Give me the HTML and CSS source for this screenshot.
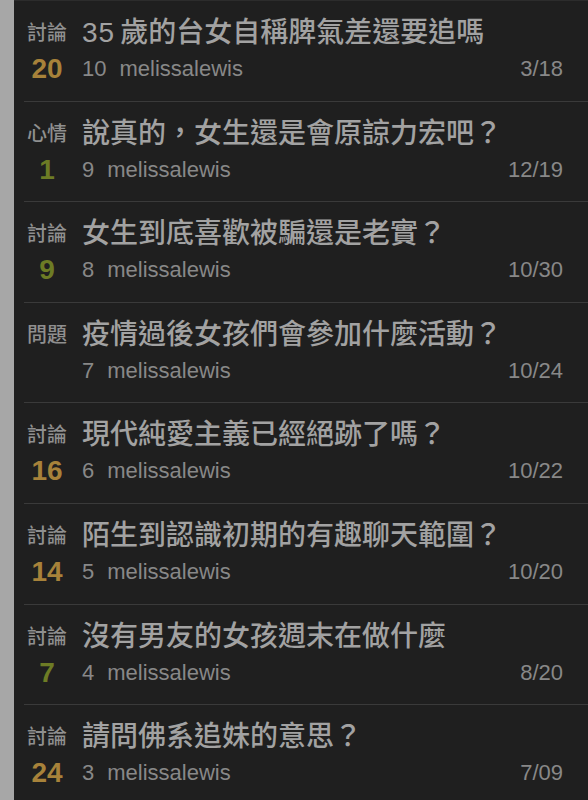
FILE: index.html
```html
<!DOCTYPE html>
<html lang="zh-Hant">
<head>
    <meta charset="UTF-8">
    <meta name="viewport" content="width=device-width, initial-scale=1.0">
    <title>melissalewis 的文章</title>
    <link rel="stylesheet" href="styles.css">
</head>
<body>
    <div class="page">
        <div class="rail"></div>

        <ul class="post-list">
            <li class="post">
                <div class="side">
                    <span class="category">討論</span>
                    <span class="count gold">20</span>
                </div>
                <div class="main">
                    <h2 class="title"><span class="num">35</span>歲的台女自稱脾氣差還要追嗎</h2>
                    <div class="meta">
                        <span><span class="floor">10</span>melissalewis</span>
                        <span class="date">3/18</span>
                    </div>
                </div>
            </li>

            <li class="post">
                <div class="side">
                    <span class="category">心情</span>
                    <span class="count green">1</span>
                </div>
                <div class="main">
                    <h2 class="title">說真的，女生還是會原諒力宏吧？</h2>
                    <div class="meta">
                        <span><span class="floor">9</span>melissalewis</span>
                        <span class="date">12/19</span>
                    </div>
                </div>
            </li>

            <li class="post">
                <div class="side">
                    <span class="category">討論</span>
                    <span class="count green">9</span>
                </div>
                <div class="main">
                    <h2 class="title">女生到底喜歡被騙還是老實？</h2>
                    <div class="meta">
                        <span><span class="floor">8</span>melissalewis</span>
                        <span class="date">10/30</span>
                    </div>
                </div>
            </li>

            <li class="post">
                <div class="side">
                    <span class="category">問題</span>
                    <span class="count"></span>
                </div>
                <div class="main">
                    <h2 class="title">疫情過後女孩們會參加什麼活動？</h2>
                    <div class="meta">
                        <span><span class="floor">7</span>melissalewis</span>
                        <span class="date">10/24</span>
                    </div>
                </div>
            </li>

            <li class="post">
                <div class="side">
                    <span class="category">討論</span>
                    <span class="count gold">16</span>
                </div>
                <div class="main">
                    <h2 class="title">現代純愛主義已經絕跡了嗎？</h2>
                    <div class="meta">
                        <span><span class="floor">6</span>melissalewis</span>
                        <span class="date">10/22</span>
                    </div>
                </div>
            </li>

            <li class="post">
                <div class="side">
                    <span class="category">討論</span>
                    <span class="count gold">14</span>
                </div>
                <div class="main">
                    <h2 class="title">陌生到認識初期的有趣聊天範圍？</h2>
                    <div class="meta">
                        <span><span class="floor">5</span>melissalewis</span>
                        <span class="date">10/20</span>
                    </div>
                </div>
            </li>

            <li class="post">
                <div class="side">
                    <span class="category">討論</span>
                    <span class="count green">7</span>
                </div>
                <div class="main">
                    <h2 class="title">沒有男友的女孩週末在做什麼</h2>
                    <div class="meta">
                        <span><span class="floor">4</span>melissalewis</span>
                        <span class="date">8/20</span>
                    </div>
                </div>
            </li>

            <li class="post">
                <div class="side">
                    <span class="category">討論</span>
                    <span class="count gold">24</span>
                </div>
                <div class="main">
                    <h2 class="title">請問佛系追妹的意思？</h2>
                    <div class="meta">
                        <span><span class="floor">3</span>melissalewis</span>
                        <span class="date">7/09</span>
                    </div>
                </div>
            </li>
        </ul>
    </div>
</body>
</html>
```

FILE: styles.css
```css
body {
    margin: 0;
    padding: 0;
    background-color: #1f1f1f;
    font-family: "Liberation Sans", "Noto Sans CJK TC", sans-serif;
    overflow: hidden;
}

.page {
    display: flex;
    min-height: 800px;
}

.rail {
    width: 14px;
    flex-shrink: 0;
    background-color: #a7a7a7;
}

.post-list {
    flex: 1;
    list-style-type: none;
    margin: 0;
    padding: 0 0 0 10px;
    border-top: 1px solid #2c2c2c;
}

.post {
    display: flex;
    gap: 12px;
    height: 100.6px;
    box-sizing: border-box;
    padding-top: 14px;
    border-bottom: 1px solid #3a3a3a;
}

.side {
    width: 46px;
    flex-shrink: 0;
    display: flex;
    flex-direction: column;
    align-items: center;
}

.category {
    font-size: 20px;
    font-weight: 500;
    line-height: 36px;
    color: #8f8f8f;
}

.count {
    font-size: 28px;
    font-weight: bold;
    line-height: 32px;
    margin-top: 2px;
}

.gold {
    color: #a7823a;
}

.green {
    color: #6d7c25;
}

.main {
    flex: 1;
    padding-right: 25px;
}

.title {
    margin: 0;
    font-size: 28px;
    font-weight: 500;
    line-height: 36px;
    color: #a2a2a2;
    white-space: nowrap;
}

.num {
    margin-right: 5px;
    letter-spacing: 1px;
}

.meta {
    display: flex;
    justify-content: space-between;
    margin-top: 2px;
    font-size: 22px;
    line-height: 32px;
    color: #888888;
}

.floor {
    margin-right: 13px;
}
```
